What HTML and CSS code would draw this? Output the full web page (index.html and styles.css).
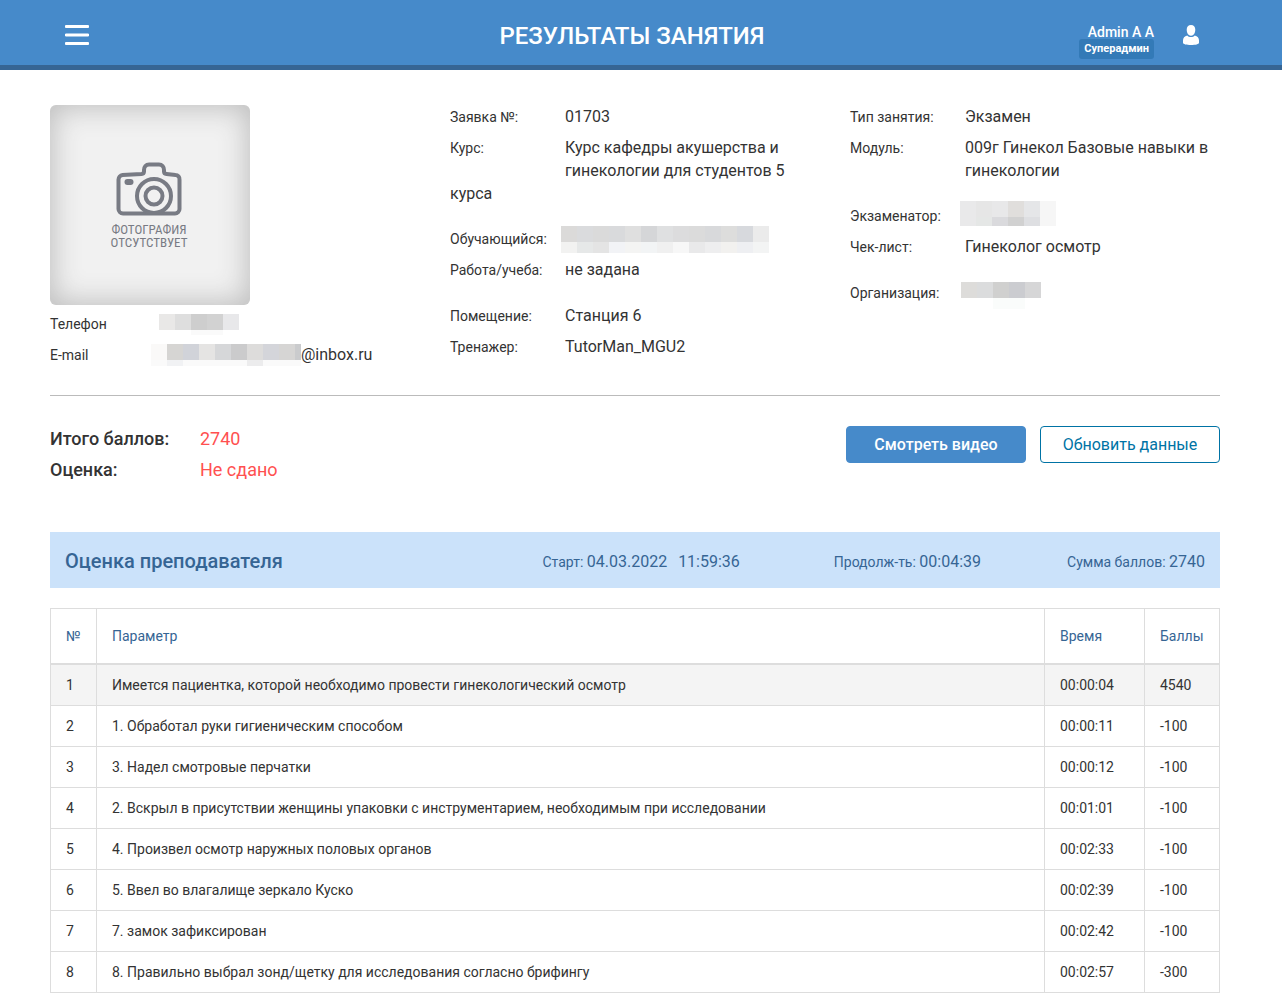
FILE: index.html
```html
<!DOCTYPE html>
<html lang="ru">
<head>
<meta charset="utf-8">
<title>Результаты занятия</title>
<link rel="stylesheet" href="styles.css">
</head>
<body>
<header class="topbar">
  <button class="menu-btn" type="button" aria-label="Меню">
    <svg width="24" height="20" viewBox="0 0 24 20"><path d="M1 1.5h22M1 10h22M1 18.5h22" stroke="#fff" stroke-width="2.8" stroke-linecap="round"/></svg>
  </button>
  <h1 class="title">РЕЗУЛЬТАТЫ ЗАНЯТИЯ</h1>
  <div class="account">
    <div class="who"><span class="name">Admin A A</span><span class="role">Суперадмин</span></div>
    <button class="user-btn" type="button" aria-label="Профиль">
      <svg width="16" height="20" viewBox="0 0 16 20"><path d="M8 0C5.300 0 3.700 1.900 3.700 4.700c0 2.100.8 4 1.900 5.100.7.700 1.500 1 2.400 1s1.700-.3 2.400-1c1.100-1.100 1.900-3 1.900-5.100C12.300 1.900 10.700 0 8 0z" fill="#fff"/><path d="M4.200 10.400C1.500 11.100 0 12.700 0 15.500v2.300C0 19.200 3.500 20 8 20s8-.8 8-2.200v-2.300c0-2.800-1.500-4.400-4.200-5.100-1 1.100-2.300 1.700-3.800 1.700s-2.800-.6-3.800-1.700z" fill="#fff"/></svg>
    </button>
  </div>
</header>
<main class="page">
  <section class="info">
    <div class="col">
      <div class="photo">
        <svg width="66" height="54" viewBox="0 0 66 54" fill="none" stroke="#787b84" stroke-width="4">
          <path d="M38 51.500H7a4.500 4.500 0 0 1-4.500-4.500V17.500a4.500 4.500 0 0 1 4-4.500l19-1c1.800-.2 2.500-1 2.500-2.500V8c0-3 2-5.500 5-5.500h10c3 0 5 2.500 5 5.500v1.500c0 1.500.7 2.300 2.500 2.500l9 1a4 4 0 0 1 4 4.500V47a4.500 4.500 0 0 1-4.500 4.500H38z"/>
          <circle cx="38" cy="34" r="17" fill="#f1f1f1"/><circle cx="38" cy="34" r="8.500"/>
          <rect x="8.500" y="17" width="9" height="6" rx="3" fill="#787b84" stroke="none"/>
        </svg>
        <div class="photo-text">ФОТОГРАФИЯ<br>ОТСУТСТВУЕТ</div>
      </div>
      <div class="field contact"><span class="label">Телефон</span><span class="mosaic m-phone"></span></div>
      <div class="field contact"><span class="label">E-mail</span><span class="mosaic m-mail"></span>@inbox.ru</div>
    </div>
    <div class="col">
      <div class="group">
        <div class="field"><span class="label">Заявка №:</span>01703</div>
        <div class="field"><span class="label">Курс:</span>Курс кафедры акушерства и гинекологии для студентов 5 курса</div>
      </div>
      <div class="group">
        <div class="field"><span class="label">Обучающийся:</span><span class="mosaic m-student"></span></div>
        <div class="field"><span class="label">Работа/учеба:</span>не задана</div>
      </div>
      <div class="group">
        <div class="field"><span class="label">Помещение:</span>Станция 6</div>
        <div class="field"><span class="label">Тренажер:</span>TutorMan_MGU2</div>
      </div>
    </div>
    <div class="col">
      <div class="group">
        <div class="field"><span class="label">Тип занятия:</span>Экзамен</div>
        <div class="field"><span class="label">Модуль:</span>009г Гинекол Базовые навыки в гинекологии</div>
      </div>
      <div class="group">
        <div class="field"><span class="label">Экзаменатор:</span><span class="mosaic m-examiner"></span></div>
        <div class="field"><span class="label">Чек-лист:</span>Гинеколог осмотр</div>
      </div>
      <div class="group">
        <div class="field"><span class="label">Организация:</span><span class="mosaic m-org"></span></div>
      </div>
    </div>
  </section>
  <section class="summary">
    <dl class="totals">
      <dt>Итого баллов:</dt><dd>2740</dd>
      <dt>Оценка:</dt><dd>Не сдано</dd>
    </dl>
    <div class="actions">
      <button class="btn btn-primary" type="button">Смотреть видео</button>
      <button class="btn btn-outline" type="button">Обновить данные</button>
    </div>
  </section>
  <section class="band">
    <h2 class="band-title">Оценка преподавателя</h2>
    <div class="stat">Старт: <span class="num">04.03.2022</span><span class="num clock">11:59:36</span></div>
    <div class="stat">Продолж-ть: <span class="num">00:04:39</span></div>
    <div class="stat">Сумма баллов: <span class="num">2740</span></div>
  </section>
  <table class="results">
    <colgroup><col class="c-no"><col><col class="c-time"><col class="c-score"></colgroup>
    <thead><tr><th>№</th><th>Параметр</th><th>Время</th><th>Баллы</th></tr></thead>
    <tbody>
      <tr class="active"><td>1</td><td>Имеется пациентка, которой необходимо провести гинекологический осмотр</td><td>00:00:04</td><td>4540</td></tr>
      <tr><td>2</td><td>1. Обработал руки гигиеническим способом</td><td>00:00:11</td><td>-100</td></tr>
      <tr><td>3</td><td>3. Надел смотровые перчатки</td><td>00:00:12</td><td>-100</td></tr>
      <tr><td>4</td><td>2. Вскрыл в присутствии женщины упаковки с инструментарием, необходимым при исследовании</td><td>00:01:01</td><td>-100</td></tr>
      <tr><td>5</td><td>4. Произвел осмотр наружных половых органов</td><td>00:02:33</td><td>-100</td></tr>
      <tr><td>6</td><td>5. Ввел во влагалище зеркало Куско</td><td>00:02:39</td><td>-100</td></tr>
      <tr><td>7</td><td>7. замок зафиксирован</td><td>00:02:42</td><td>-100</td></tr>
      <tr><td>8</td><td>8. Правильно выбрал зонд/щетку для исследования согласно брифингу</td><td>00:02:57</td><td>-300</td></tr>
    </tbody>
  </table>
</main>
</body>
</html>
```
FILE: styles.css
```css
* { box-sizing: border-box; }
body {
  margin: 0;
  background: #fff;
  color: #333;
  font: 16px/23px Roboto, "Noto Sans", sans-serif;
}
button { font: inherit; cursor: pointer; }
svg { display: block; }

.topbar {
  display: grid;
  grid-template-columns: 1fr auto 1fr;
  align-items: center;
  height: 70px;
  padding: 0 83px 0 65px;
  background: #468aca;
  border-bottom: 5px solid #366594;
  color: #fff;
}
.menu-btn, .user-btn { padding: 0; border: 0; background: none; }
.menu-btn { justify-self: start; padding-top: 5px; }
.title { margin: 0; padding-top: 7px; font-size: 24px; line-height: 30px; font-weight: 500; }
.account { display: flex; justify-content: flex-end; align-items: center; gap: 29px; padding-top: 5px; }
.who { display: flex; flex-direction: column; align-items: flex-end; padding-top: 14px; }
.name { font-size: 14px; line-height: 14px; font-weight: 500; }
.role {
  padding: 0 5px;
  border-radius: 3px;
  background: #337ab7;
  font-size: 11px;
  line-height: 20px;
  font-weight: 700;
}

.page { padding: 35px 62px 0 50px; }
.info {
  display: grid;
  grid-template-columns: repeat(3, 1fr);
  gap: 30px;
  padding-bottom: 21px;
  border-bottom: 1px solid #bbb;
}
.photo {
  display: flex;
  flex-direction: column;
  align-items: center;
  width: 200px;
  height: 200px;
  margin-bottom: 7px;
  padding: 57px 2px 0 0;
  border-radius: 6px;
  background: #f1f1f1;
  box-shadow: inset 0 0 28px 3px #bebebe;
}
.photo-text {
  padding-top: 7px;
  color: #787b84;
  font: 13px/13px "Liberation Sans Narrow", "Roboto Condensed", Roboto, sans-serif;
  text-align: center;
}
.field { padding-bottom: 8px; }
.label { float: left; width: 115px; height: 25px; padding-top: 1px; font-size: 14px; }
.contact .label { width: 101px; }
.group + .group { padding-top: 15px; }
.group:first-child + .group { padding-top: 14px; }

.mosaic { display: inline-block; vertical-align: top; background-repeat: no-repeat; background-position: 0 0, 0 16px; }
.m-phone {
  width: 80px; height: 21px; margin: 2px 0 0 8px;
  background-size: 100% 16px, 100% 5px;
  background-image:
    linear-gradient(90deg, #e9e8e7 16px, #dedede 16px 32px, #cecece 32px 48px, #d2d2d2 48px 64px, #e8e8ea 64px),
    linear-gradient(90deg, #fff 32px, #fafafa 32px 64px, #fff 64px);
}
.m-mail {
  width: 150px; height: 22px; margin-top: 1px;
  background-size: 100% 16px, 100% 6px;
  background-image:
    linear-gradient(90deg, #faf9f8 16px, #d6d5d3 16px 32px, #d1d3d9 32px 48px, #e5e4e3 48px 64px, #d6d7d9 64px 80px, #cbcbcc 80px 96px, #dddcdb 96px 112px, #d4d5da 112px 128px, #d6d5d4 128px 144px, #cacbcd 144px),
    linear-gradient(90deg, #fafafa 16px, #f1f2f4 16px 32px, #fafafa 32px 96px, #ececed 96px 112px, #fafafa 112px);
}
.m-student {
  width: 208px; height: 27px; margin: -1px 0 -3px -4px;
  background-size: 100% 16px, 100% 11px;
  background-image:
    linear-gradient(90deg, #dbdad9 16px, #dadbdd 16px 32px, #dadada 32px 48px, #d9dadc 48px 64px, #dfdfdf 64px 80px, #d5d6d8 80px 96px, #dfe0e1 96px 112px, #dcdcdd 112px 128px, #dbdbdb 128px 144px, #d8d9db 144px 160px, #dddddc 160px 176px, #d7d9dd 176px 192px, #ebebeb 192px),
    linear-gradient(90deg, #f2f2f1 16px, #e6e8e8 16px 32px, #e4e4e4 32px 48px, #f2f3f6 48px 64px, #f4f4f3 64px 80px, #f2f4f5 80px 96px, #f0f0f0 96px 112px, #f7f7f7 112px 128px, #e9e9ea 128px 144px, #eeeeef 144px 160px, #f2f1ef 160px 176px, #eeeff2 176px 192px, #f3f4f4 192px);
}
.m-examiner {
  width: 96px; height: 25px; margin: -3px 0 0 -5px;
  background-size: 100% 16px, 100% 9px;
  background-image:
    linear-gradient(90deg, #e9e9ea 16px, #e6e6e6 16px 32px, #e8e8e9 32px 48px, #e0dedc 48px 64px, #e5e6e8 64px 80px, #f6f6f6 80px),
    linear-gradient(90deg, #e9e9ea 16px, #e5e7e6 16px 32px, #dadadd 32px 48px, #d1d1d1 48px 64px, #dedfe2 64px 80px, #f6f6f6 80px);
}
.m-org {
  width: 80px; height: 27px; margin: 1px 0 -5px -4px;
  background-size: 100% 16px, 100% 11px;
  background-image:
    linear-gradient(90deg, #dddcda 16px, #dbdcdd 16px 32px, #d0d0cf 32px 48px, #cbccd0 48px 64px, #d6d6d7 64px),
    linear-gradient(90deg, #fff 32px, #fafcfb 32px 64px, #fff 64px);
}

.summary { display: flex; justify-content: space-between; align-items: flex-start; padding: 30px 0 51px; }
.totals { display: grid; grid-template-columns: 150px auto; row-gap: 8px; margin: 0; padding-top: 1px; font-size: 18px; }
.totals dt { font-weight: 500; }
.totals dd { margin: 0; color: #ff5050; }
.actions { display: flex; gap: 14px; }
.btn { width: 180px; height: 37px; padding: 0; border: 1px solid #468aca; border-radius: 4px; }
.btn-primary { background: #468aca; color: #fff; font-weight: 500; }
.btn-outline { border-color: #0073a5; background: #fff; color: #0073a5; }

.band {
  display: grid;
  grid-template-columns: 477fr 291fr 233fr auto;
  align-items: center;
  min-height: 56px;
  padding: 2px 15px 0;
  background: #cbe2fa;
  color: #366594;
}
.band-title { margin: 0; font-size: 20px; font-weight: 500; }
.stat { padding-top: 2px; font-size: 14px; white-space: nowrap; }
.num { font-size: 16px; }
.clock { margin-left: 11px; }

.results { width: 100%; margin-top: 20px; border-collapse: collapse; table-layout: fixed; font-size: 14px; line-height: 20px; }
.results th, .results td { padding: 10px 15px; border: 1px solid #ddd; text-align: left; font-weight: 400; }
.results th { padding: 17px 15px; border-bottom-width: 2px; color: #366594; }
.results .active { background: #f4f4f4; }
.c-no { width: 46px; }
.c-time { width: 100px; }
.c-score { width: 75px; }
```
